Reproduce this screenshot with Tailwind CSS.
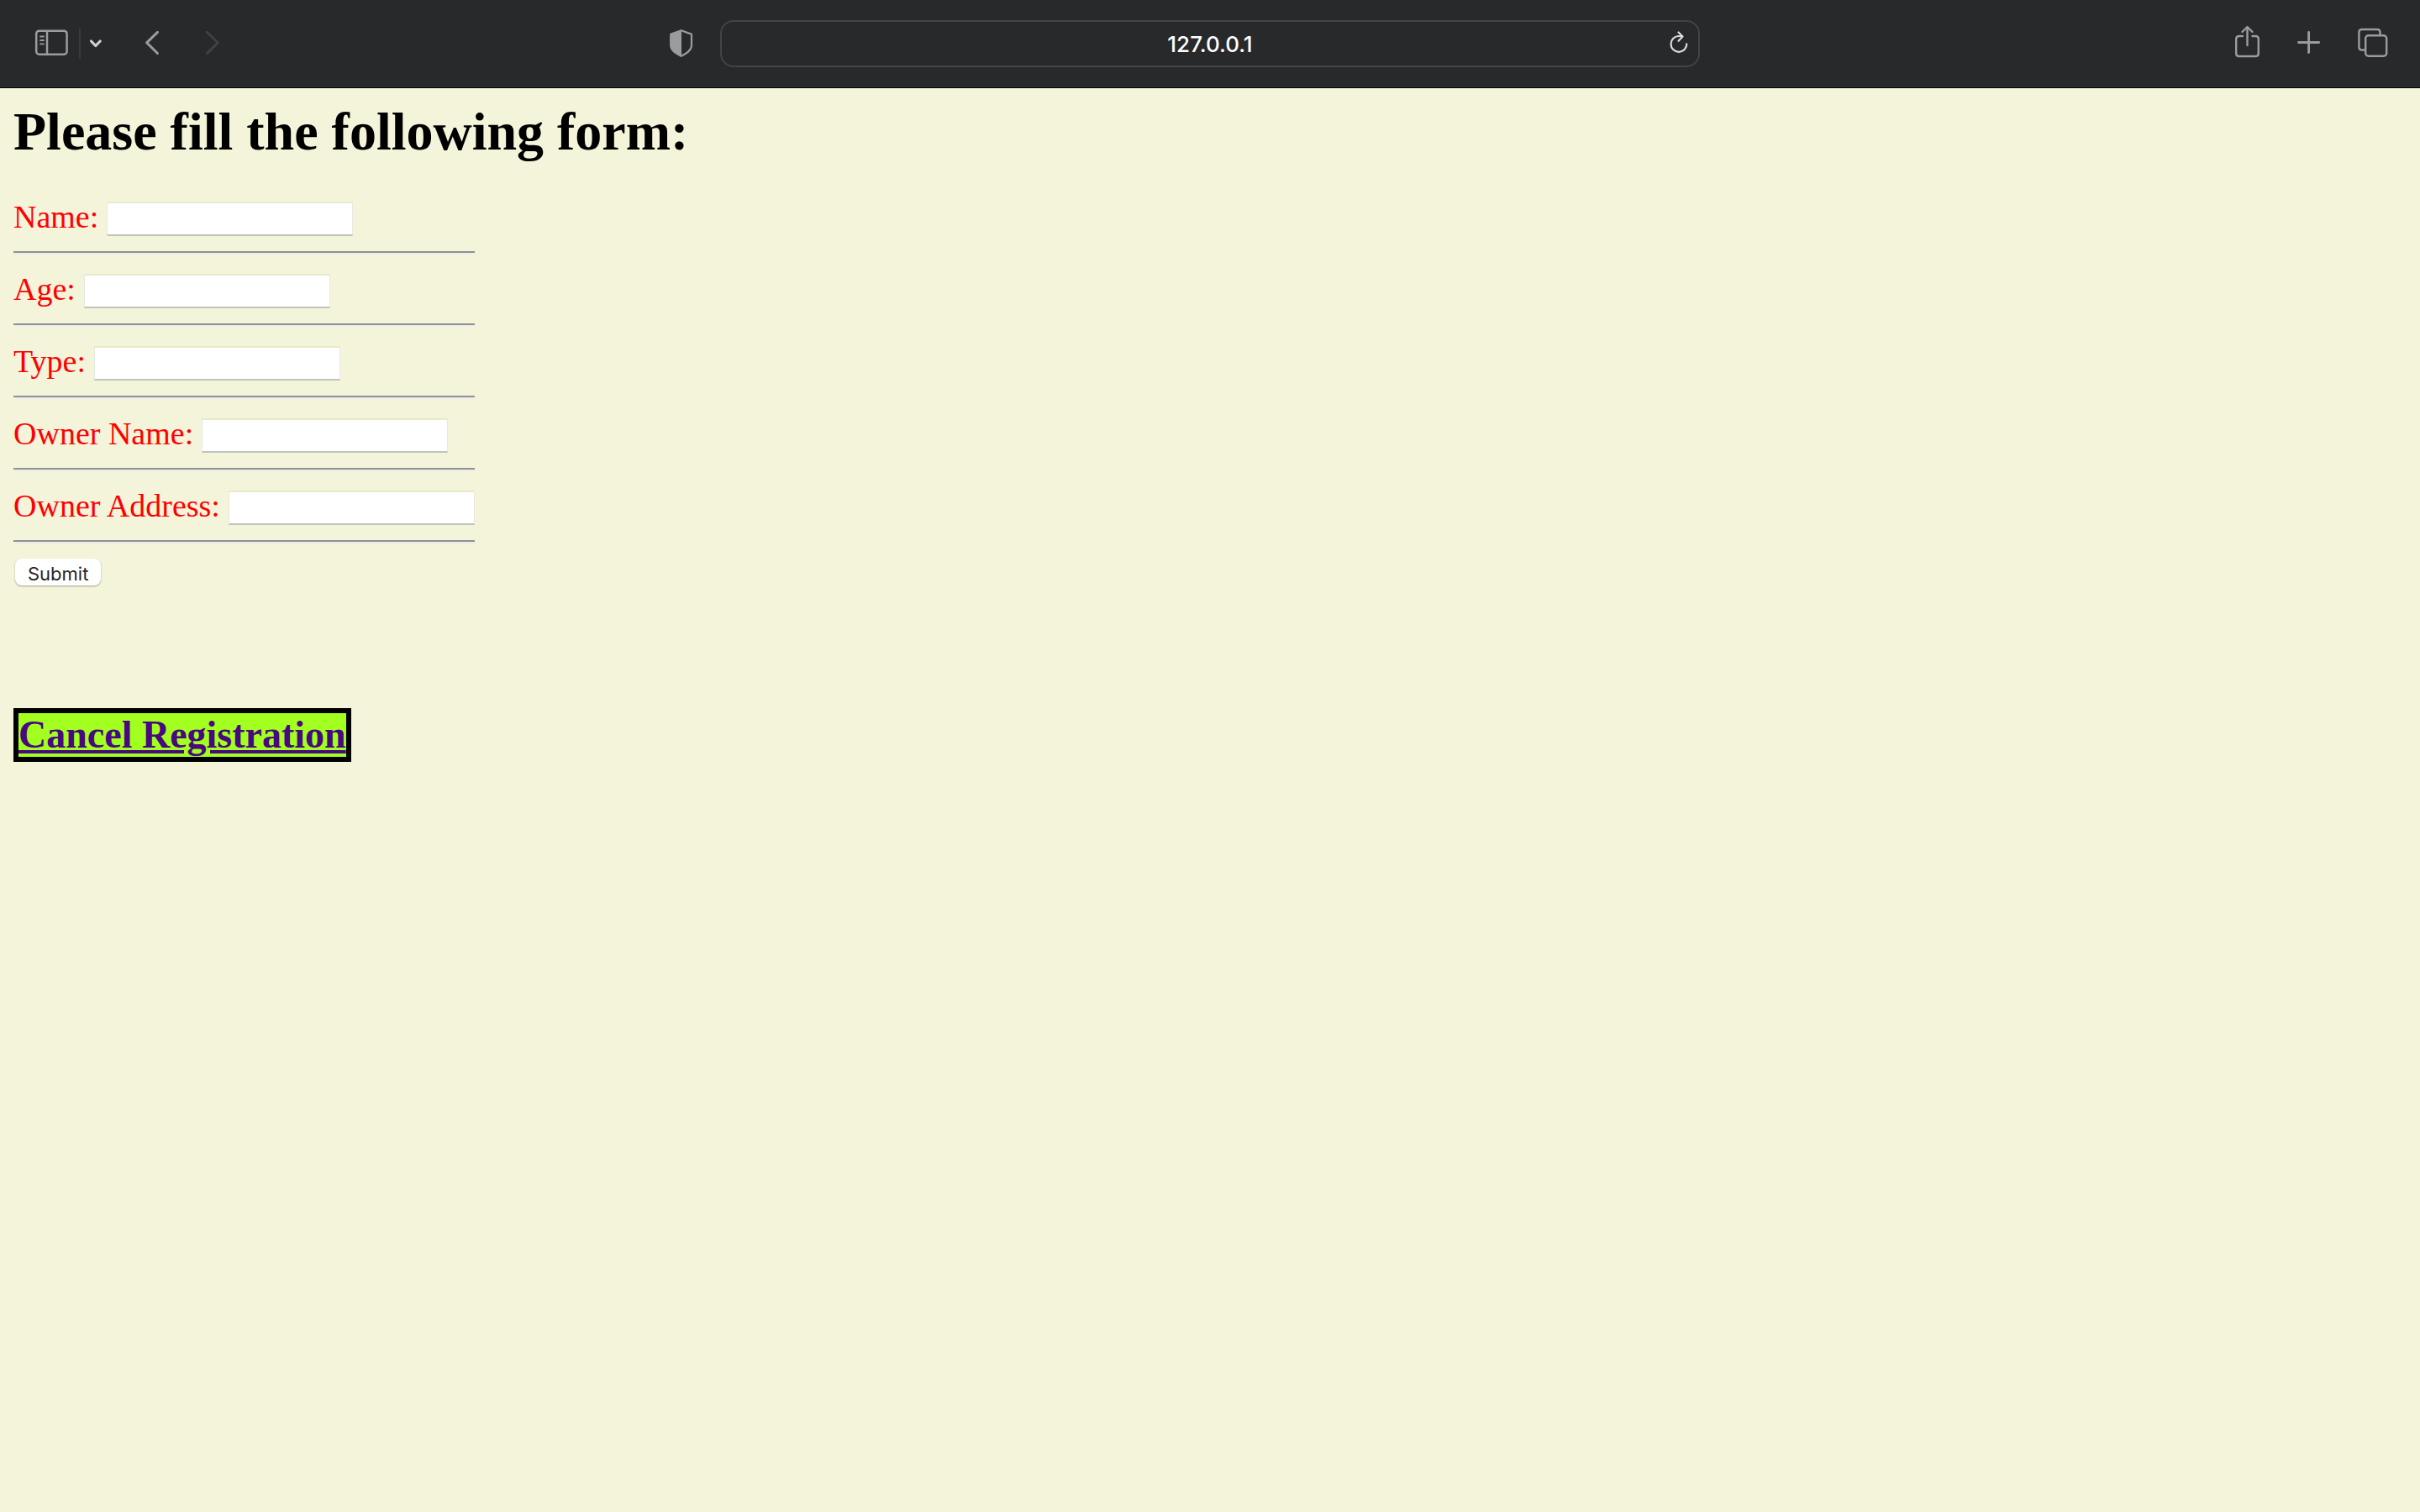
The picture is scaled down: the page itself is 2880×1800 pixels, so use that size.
<!DOCTYPE html>
<html lang="en">
<head>
<meta charset="utf-8">
<title>Registration form</title>
<script src="https://cdn.jsdelivr.net/npm/@tailwindcss/browser@4"></script>
</head>
<body class="min-h-screen bg-[#f4f4da]">
<header class="grid h-[105px] grid-cols-[1fr_40.5%_1fr] items-center border-b border-black bg-[#28292b] font-[Inter,sans-serif] text-[#9b9c9e]">
  <div class="flex items-center pr-[30px] pl-10">
    <button aria-label="Show sidebar"><svg class="block" width="44" height="48" viewBox="0 0 44 48" fill="none" stroke="currentColor" stroke-width="2.5" stroke-linecap="round"><rect x="3.2" y="8.7" width="36.4" height="28" rx="3.5"/><path d="M16 9v28"/><path stroke-width="1.8" d="M8 15.5h4M8 20h4M8 24.3h4"/></svg></button>
    <span class="ml-2.5 h-9 w-0.5 bg-[#3a3b3d]"></span>
    <button aria-label="Tab groups" class="ml-2 text-[#d2d2d3]"><svg class="block" width="20" height="48" viewBox="0 0 20 48" fill="none" stroke="currentColor" stroke-width="3.2" stroke-linecap="round" stroke-linejoin="round"><path d="M4.500 21l5.300 5.500 5.400-5.500"/></svg></button>
    <button aria-label="Back" class="ml-[45px]"><svg class="block" width="24" height="48" viewBox="0 0 24 48" fill="none" stroke="currentColor" stroke-width="3" stroke-linecap="round" stroke-linejoin="round"><path d="M18.500 10.300L5.600 22.800 18.500 35.500"/></svg></button>
    <button aria-label="Forward" class="ml-12 text-[#404143]"><svg class="block" width="24" height="48" viewBox="0 0 24 48" fill="none" stroke="currentColor" stroke-width="3" stroke-linecap="round" stroke-linejoin="round"><path d="M5.500 10.300l12.900 12.500L5.500 35.500"/></svg></button>
    <button aria-label="Privacy report" class="ml-auto"><svg class="block" width="32" height="48" viewBox="0 0 32 48"><path fill="none" stroke="currentColor" stroke-width="2.200" stroke-linejoin="round" d="M15.700 8.200L27.800 12.600Q28 12.700 28 13.500V26C28 32 22 35.500 15.700 38.800 9.400 35.500 3.200 32 3.200 26V13.500Q3.200 12.700 3.500 12.600Z"/><path fill="currentColor" d="M16 8v31C9 35.500 3 32 3 26V12.500Z"/></svg></button>
  </div>
  <div class="relative flex h-14">
    <input aria-label="Address" value="127.0.0.1" class="h-full w-full rounded-2xl border-2 border-[#434446] bg-transparent text-center text-[26px] font-medium text-white">
    <button aria-label="Reload" class="absolute top-1 right-2.5 text-[#dcdcdd]"><svg class="block" width="28" height="48" viewBox="0 0 28 48" fill="none" stroke="currentColor" stroke-width="2.200" stroke-linecap="round" stroke-linejoin="round"><path d="M22.300 24.300a9.400 9.400 0 1 1-9.400-9.300H17"/><path d="M12.500 10.500l5 5-5 5.300"/></svg></button>
  </div>
  <div class="flex items-center justify-end gap-10 pr-9">
    <button aria-label="Share"><svg class="block" width="32" height="48" viewBox="0 0 32 48" fill="none" stroke="currentColor" stroke-width="2.400" stroke-linecap="round" stroke-linejoin="round"><path d="M9 15H4.700Q1.200 15 1.200 18.500V35.500Q1.200 39 4.700 39H24.300Q27.800 39 27.800 35.500V18.500Q27.800 15 24.300 15H20.500M14.500 26V4.500M8.500 10l6-6 6 6"/></svg></button>
    <button aria-label="New tab"><svg class="block" width="32" height="48" viewBox="0 0 32 48" fill="none" stroke="currentColor" stroke-width="2.800" stroke-linecap="round"><path d="M3.500 22.500h24.200M15.600 10.400v24.200"/></svg></button>
    <button aria-label="Show all tabs"><svg class="block" width="40" height="48" viewBox="0 0 40 48" fill="none" stroke="currentColor" stroke-width="2.400" stroke-linejoin="round"><rect x="11.200" y="14.200" width="25" height="24.600" rx="3.500"/><path d="M28.500 14V10.500Q28.500 7 25 7H7Q3.400 7 3.400 10.500V28Q3.400 31.500 7 31.500H11"/></svg></button>
  </div>
</header>
<main class="px-4 pt-[15px] font-['Liberation_Serif',serif]">
  <h1 class="mb-[41px] text-[64px] leading-[74px] font-bold text-black">Please fill the following form:</h1>
  <form class="w-fit text-[38px] leading-[46px] text-[#ff0000]">
    <div class="flex items-end gap-2.5"><label for="name">Name:</label><input id="name" type="text" class="h-[41px] w-[293px] border border-t-2 border-b-2 border-[#e8e8e4] border-t-[#e9e9c9] border-b-[#c3c3bd] bg-white px-1 text-[22px] text-black"></div>
    <hr class="my-[18px] border-t-2 border-b-2 border-t-[#909090] border-b-[#ececec]">
    <div class="flex items-end gap-2.5"><label for="age">Age:</label><input id="age" type="text" class="h-[41px] w-[293px] border border-t-2 border-b-2 border-[#e8e8e4] border-t-[#e9e9c9] border-b-[#c3c3bd] bg-white px-1 text-[22px] text-black"></div>
    <hr class="my-[18px] border-t-2 border-b-2 border-t-[#909090] border-b-[#ececec]">
    <div class="flex items-end gap-2.5"><label for="type">Type:</label><input id="type" type="text" class="h-[41px] w-[293px] border border-t-2 border-b-2 border-[#e8e8e4] border-t-[#e9e9c9] border-b-[#c3c3bd] bg-white px-1 text-[22px] text-black"></div>
    <hr class="my-[18px] border-t-2 border-b-2 border-t-[#909090] border-b-[#ececec]">
    <div class="flex items-end gap-2.5"><label for="owner">Owner Name:</label><input id="owner" type="text" class="h-[41px] w-[293px] border border-t-2 border-b-2 border-[#e8e8e4] border-t-[#e9e9c9] border-b-[#c3c3bd] bg-white px-1 text-[22px] text-black"></div>
    <hr class="my-[18px] border-t-2 border-b-2 border-t-[#909090] border-b-[#ececec]">
    <div class="flex items-end gap-2.5"><label for="address">Owner Address:</label><input id="address" type="text" class="h-[41px] w-[293px] border border-t-2 border-b-2 border-[#e8e8e4] border-t-[#e9e9c9] border-b-[#c3c3bd] bg-white px-1 text-[22px] text-black"></div>
    <hr class="my-[18px] border-t-2 border-b-2 border-t-[#909090] border-b-[#ececec]">
    <button type="submit" class="mx-0.5 flex h-8 items-center rounded-lg bg-white px-[15px] pt-1 font-[Inter,sans-serif] text-[22px] leading-7 text-[#262626] shadow-[0_1px_2px_rgba(0,0,0,0.35)]">Submit</button>
  </form>
  <h2 class="mt-[146px] w-fit border-6 border-black bg-[#a3ff1f] text-[46px] leading-[52px] font-bold"><a href="#" class="text-[#48087f] underline">Cancel Registration</a></h2>
</main>
</body>
</html>
